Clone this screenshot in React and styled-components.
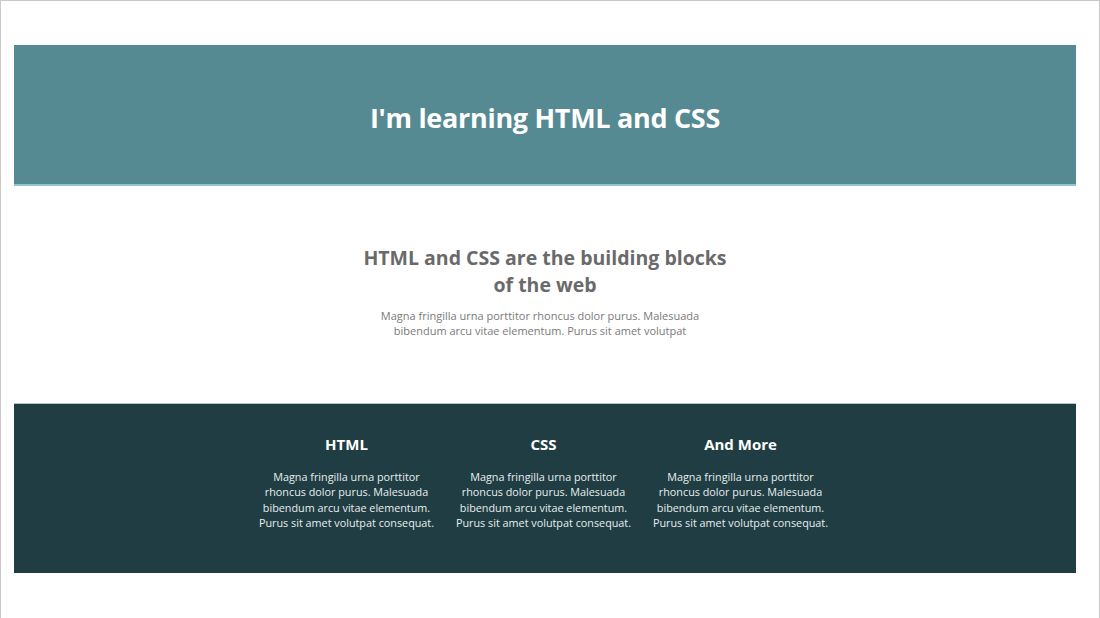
import React from 'react';
import styled, { createGlobalStyle } from 'styled-components';

const GlobalStyle = createGlobalStyle`
  html, body {
    margin: 0;
    padding: 0;
    background: #ffffff;
  }
  body {
    font-family: 'Open Sans', 'Noto Sans', sans-serif;
  }
`;

const Frame = styled.div`
  box-sizing: border-box;
  width: 1100px;
  height: 618px;
  border: 1px solid #c9c9c9;
  border-bottom: none;
  padding: 44px 23px 0 13px;
  overflow: hidden;
`;

const Header = styled.header`
  height: 139px;
  background: #568a93;
  border-bottom: 2px solid #8fc4d8;
  display: flex;
  align-items: center;
  justify-content: center;
`;

const Title = styled.h1`
  margin: 0;
  padding-top: 5px;
  color: #ffffff;
  font-size: 27px;
  font-weight: 700;
  letter-spacing: -0.3px;
`;

const Intro = styled.section`
  height: 217px;
  display: flex;
  flex-direction: column;
  align-items: center;
  justify-content: center;
  text-align: center;
  padding-bottom: 7px;
  box-sizing: border-box;
`;

const IntroTitle = styled.h2`
  margin: 0 0 10px;
  width: 380px;
  color: #6a6a6a;
  font-size: 19.5px;
  line-height: 27px;
  font-weight: 700;
`;

const IntroText = styled.p`
  margin: 0 10px 0 0;
  width: 340px;
  color: #7a7a7a;
  font-size: 11px;
  line-height: 15px;
`;

const Features = styled.section`
  height: 170px;
  background: #1f3d42;
  border-top: 1px solid #b8c4c6;
  box-sizing: border-box;
  display: flex;
  justify-content: center;
  padding-top: 29px;
  padding-right: 3px;
`;

const Column = styled.div`
  width: 197px;
  display: flex;
  flex-direction: column;
  align-items: center;
  text-align: center;
  color: #f2f2f2;
`;

const ColumnTitle = styled.h3`
  margin: 0 0 14px;
  font-size: 15px;
  line-height: 22px;
  font-weight: 700;
  color: #ffffff;
`;

const ColumnText = styled.p`
  margin: 0;
  width: 188px;
  font-size: 10.8px;
  line-height: 15.3px;
  color: #e8eeee;
`;

const lorem =
  'Magna fringilla urna porttitor rhoncus dolor purus. Malesuada bibendum arcu vitae elementum. Purus sit amet volutpat consequat.';

const columns = ['HTML', 'CSS', 'And More'];

export default function App() {
  return (
    <>
      <GlobalStyle />
      <Frame>
        <Header>
          <Title>I'm learning HTML and CSS</Title>
        </Header>
        <Intro>
          <IntroTitle>HTML and CSS are the building blocks of the web</IntroTitle>
          <IntroText>
            Magna fringilla urna porttitor rhoncus dolor purus. Malesuada
            bibendum arcu vitae elementum. Purus sit amet volutpat
          </IntroText>
        </Intro>
        <Features>
          {columns.map((c) => (
            <Column key={c}>
              <ColumnTitle>{c}</ColumnTitle>
              <ColumnText>{lorem}</ColumnText>
            </Column>
          ))}
        </Features>
      </Frame>
    </>
  );
}
